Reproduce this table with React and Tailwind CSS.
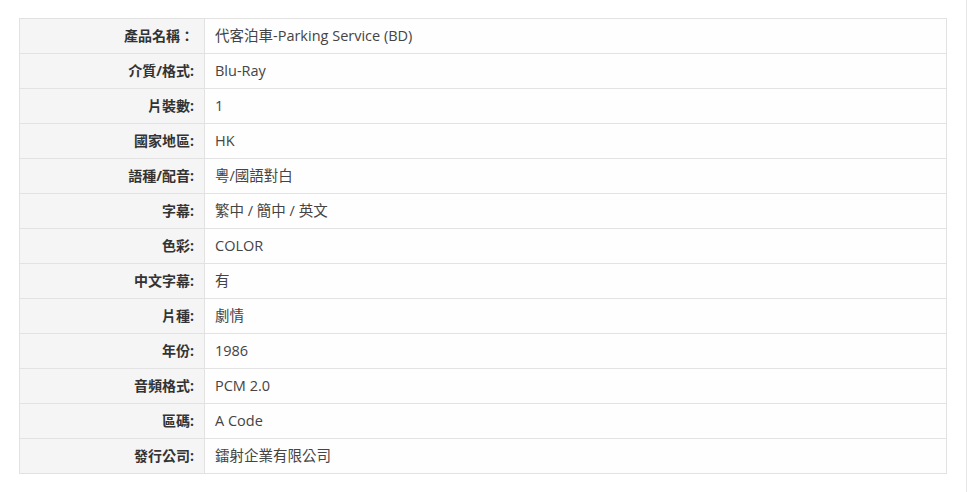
export default function App() {
  const rows = [
    ["產品名稱：", "代客泊車-Parking Service (BD)"],
    ["介質/格式:", "Blu-Ray"],
    ["片裝數:", "1"],
    ["國家地區:", "HK"],
    ["語種/配音:", "粵/國語對白"],
    ["字幕:", "繁中 / 簡中 / 英文"],
    ["色彩:", "COLOR"],
    ["中文字幕:", "有"],
    ["片種:", "劇情"],
    ["年份:", "1986"],
    ["音頻格式:", "PCM 2.0"],
    ["區碼:", "A Code"],
    ["發行公司:", "鐳射企業有限公司"],
  ];
  return (
    <div
      className="h-[492px] w-[967px] border-r border-[#e6e6e6] bg-white pt-[18px] pl-[19px]"
      style={{ fontFamily: '"Open Sans", "Noto Sans CJK TC", sans-serif' }}
    >
      <div className="grid w-[928px] grid-cols-[185px_1fr] border-l border-t border-[#e2e2e2]">
        {rows.map(([k, v]) => (
          <div key={k} className="contents">
            <div className="flex h-[35px] items-center justify-end border-b border-r border-[#e2e2e2] bg-[#f5f5f5] pr-[10px] pb-[1px] text-[14px] font-bold text-[#333]">
              {k}
            </div>
            <div className="flex h-[35px] items-center border-b border-r border-[#e2e2e2] bg-[#fefefe] pl-[10px] pb-[1px] text-[14.5px] text-[#444]">
              {v}
            </div>
          </div>
        ))}
      </div>
    </div>
  );
}
